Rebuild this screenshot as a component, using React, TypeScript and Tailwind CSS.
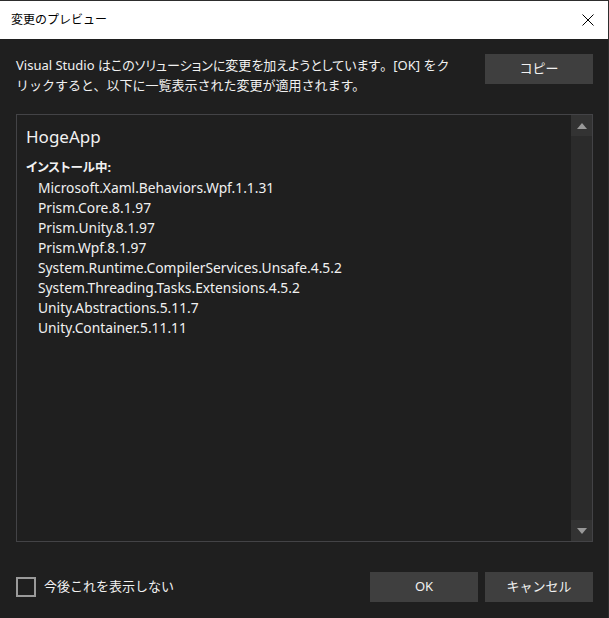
const packages = [
  'Microsoft.Xaml.Behaviors.Wpf.1.1.31',
  'Prism.Core.8.1.97',
  'Prism.Unity.8.1.97',
  'Prism.Wpf.8.1.97',
  'System.Runtime.CompilerServices.Unsafe.4.5.2',
  'System.Threading.Tasks.Extensions.4.5.2',
  'Unity.Abstractions.5.11.7',
  'Unity.Container.5.11.11',
];

const font = { fontFamily: '"Noto Sans", "Noto Sans CJK JP", sans-serif' };

export default function App() {
  return (
    <div
      className="w-[609px] h-[618px] bg-[#1f1f1f] text-[#f1f1f1] flex flex-col border-t border-r border-[#2d2d2d] overflow-hidden"
      style={font}
    >
      {/* title bar */}
      <div className="h-[38px] bg-white flex items-center justify-between pl-[11px] pr-[14px] shrink-0">
        <span className="text-[12px] text-black">変更のプレビュー</span>
        <svg width="12" height="12" viewBox="0 0 12 12">
          <path d="M0.5 0.5 L11.5 11.5 M11.5 0.5 L0.5 11.5" stroke="#000" strokeWidth="1" />
        </svg>
      </div>

      <div className="flex-1 flex flex-col pl-[16px] pr-[15px]">
        {/* description */}
        <div className="flex justify-between items-start mt-[15px]">
          <p className="text-[13px] leading-[20px] whitespace-nowrap mt-[1px]">
            <span className="[font-feature-settings:'palt']">
              Visual Studio はこのソリューションに変更を加えようとしています
            </span>
            。[OK] をク
            <br />
            リックすると、以下に一覧表示された変更が適用されます。
          </p>
          <button className="w-[108px] h-[30px] bg-[#3f3f3f] text-[13px] text-[#f1f1f1]">コピー</button>
        </div>

        {/* change list */}
        <div className="mt-[19px] h-[428px] border border-[#434346] flex">
          <div className="flex-1 pl-[9px] pt-[10px]">
            <div className="text-[17px] leading-[24px]">HogeApp</div>
            <div className="mt-[9px] text-[12.5px] font-bold leading-[20px] [font-feature-settings:'palt']">
              インストール中:
            </div>
            <ul className="text-[13.8px] leading-[20px] pl-[12px]">
              {packages.map((p) => (
                <li key={p}>{p}</li>
              ))}
            </ul>
          </div>
          <div className="w-[21px] bg-[#2b2b2b] flex flex-col justify-between">
            <div className="h-[21px] bg-[#333333] flex items-center justify-center">
              <svg width="10" height="6" viewBox="0 0 10 6">
                <path d="M5 0 L10 6 L0 6 Z" fill="#999999" />
              </svg>
            </div>
            <div className="h-[21px] bg-[#333333] flex items-center justify-center">
              <svg width="10" height="6" viewBox="0 0 10 6">
                <path d="M0 0 L10 0 L5 6 Z" fill="#999999" />
              </svg>
            </div>
          </div>
        </div>

        {/* footer */}
        <div className="flex items-center justify-between mt-[30px]">
          <label className="flex items-center gap-[8px]">
            <span className="w-[20px] h-[20px] border-2 border-[#9a9a9a] block" />
            <span className="text-[13px]">今後これを表示しない</span>
          </label>
          <div className="flex gap-[7px]">
            <button className="w-[108px] h-[30px] bg-[#3f3f3f] text-[13px] text-[#f1f1f1]">OK</button>
            <button className="w-[108px] h-[30px] bg-[#3f3f3f] text-[13px] text-[#f1f1f1]">キャンセル</button>
          </div>
        </div>
      </div>
    </div>
  );
}
